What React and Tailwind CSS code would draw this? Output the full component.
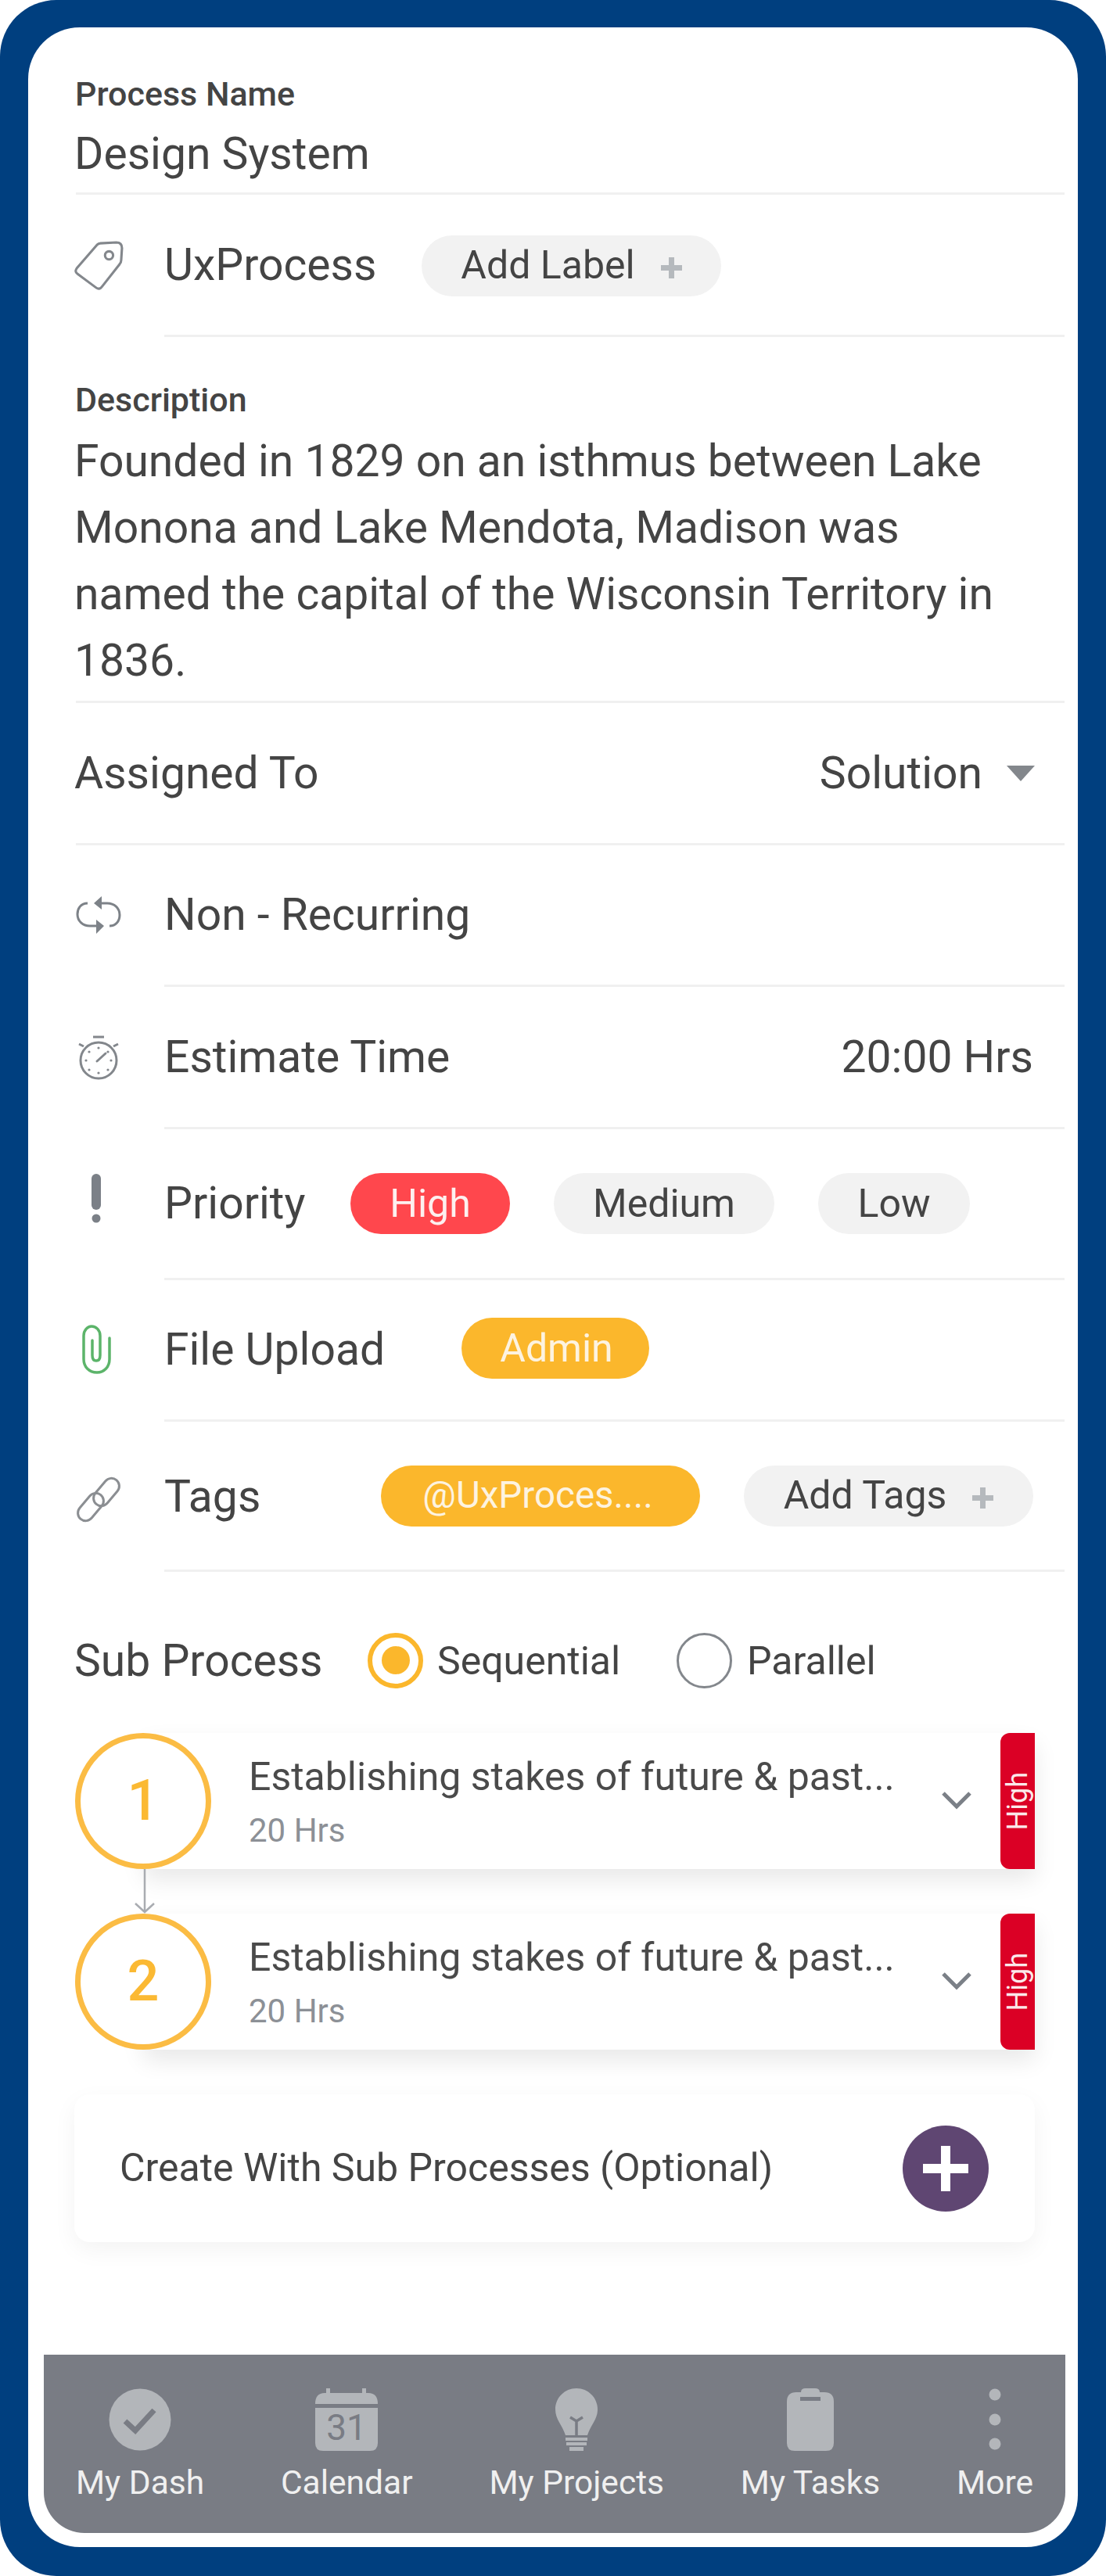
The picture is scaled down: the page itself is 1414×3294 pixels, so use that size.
const Field = ({ icon, children, className = '' }) => (
  <div className="flex">
    <div className="w-[113px] shrink-0 flex items-center">{icon}</div>
    <div className={`flex-1 flex items-center border-b-[3px] border-[#f0f0f0] ${className}`}>{children}</div>
  </div>
);

const Pill = ({ className = '', children }) => (
  <div className={`h-[78px] rounded-full flex items-center justify-center text-[50px] ${className}`}>{children}</div>
);

const TagIcon = () => (
  <svg width="64" height="64" viewBox="0 0 62 62" fill="none" stroke="#83878c" strokeWidth="3" strokeLinejoin="round" className="-ml-[3px]">
    <path d="M33 3 L53 2 Q60 2 60 9 L59 24 Q59 27 57 29 L35 57 Q32 61 28 58 L5 41 Q1 38 4 34 L29 5 Q31 3 33 3 Z" />
    <circle cx="44" cy="18" r="5" />
  </svg>
);

const RepeatIcon = () => (
  <svg width="58" height="50" viewBox="0 0 58 50" fill="none" className="mt-[-3px]">
    <path d="M15 10 C6 10 2 17 2 24 C2 33 9 39 18 39 L27 39" stroke="#7d8288" strokeWidth="3" />
    <path d="M43 39 C51 39 56 33 56 25 C56 16 49 10 40 10 L30 10" stroke="#7d8288" strokeWidth="3" />
    <path d="M26 31 L36 39 L26 49 Z M33 1 L23 10 L33 18 Z" fill="#7d8288" />
  </svg>
);

const WatchIcon = () => (
  <svg width="56" height="58" viewBox="0 0 56 58" fill="none" stroke="#83878c" className="ml-[1px]">
    <circle cx="28" cy="32" r="23" strokeWidth="3" />
    <path d="M21 2 H35" strokeWidth="3" />
    <path d="M3 11 L9 14 M53 11 L47 14" strokeWidth="3" />
    <path d="M26 33 L37 23" strokeWidth="3" strokeLinecap="round" />
    <g fill="#83878c" stroke="none">
      <circle cx="28" cy="16" r="1.6" /><circle cx="28" cy="48" r="1.6" />
      <circle cx="12" cy="32" r="1.6" /><circle cx="44" cy="32" r="1.6" />
      <circle cx="16" cy="21" r="1.6" /><circle cx="40" cy="44" r="1.6" />
      <circle cx="16" cy="44" r="1.6" /><circle cx="40" cy="21" r="1.6" />
    </g>
  </svg>
);

const BangIcon = () => (
  <svg width="14" height="64" viewBox="0 0 14 64" className="ml-[19px] mt-[-16px]" fill="#7b8087">
    <rect x="1" y="0" width="12" height="46" rx="6" />
    <circle cx="7" cy="57" r="5.5" />
  </svg>
);

const ClipIcon = () => (
  <svg width="37" height="63" viewBox="0 0 37 63" fill="none" stroke="#5cb46a" strokeWidth="3.5" strokeLinecap="round" className="ml-[8px] mt-[-4px]">
    <path d="M35 17 V44 C35 54 28 61 19 61 C9 61 2 54 2 44 V14 C2 7 7 2 12 2 C18 2 23 7 23 14 V39 C23 44 21 46 18 46 C15 46 13 44 13 39 V20" />
  </svg>
);

const LinkIcon = () => (
  <svg width="60" height="60" viewBox="0 0 60 60" fill="none" stroke="#8b8e92" strokeWidth="3" className="mt-[8px] ml-[-2px]">
    <rect x="-10" y="-20" width="20" height="40" rx="10" transform="translate(41 20) rotate(40)" />
    <rect x="-10" y="-20" width="20" height="40" rx="10" transform="translate(21 39) rotate(40)" />
  </svg>
);

const Chevron = () => (
  <svg width="40" height="24" viewBox="0 0 40 24" fill="none" stroke="#7b8087" strokeWidth="5">
    <path d="M3 3 L20 20 L37 3" />
  </svg>
);

const PlusMark = ({ className = '' }) => (
  <svg width="27" height="27" viewBox="0 0 27 27" fill="#b5b9bd" className={className}>
    <path d="M10 0 H17 V10 H27 V17 H17 V27 H10 V17 H0 V10 H10 Z" />
  </svg>
);

const SubRow = ({ num }) => (
  <div className="flex h-[174px]">
    <div className="relative z-10 -ml-[1px] w-[174px] h-[174px] shrink-0 rounded-full border-[7px] border-[#fbbc44] bg-white flex items-center justify-center text-[72px] font-medium text-[#fbb933]">
      {num}
    </div>
    <div className="-ml-[86px] flex-1 flex bg-white shadow-[0_14px_28px_rgba(0,0,0,0.09)]">
      <div className="pl-[134px] flex-1 pt-[28px]">
        <div className="text-[50px] leading-[56px] text-[#4a4a4a]">Establishing stakes of future &amp; past...</div>
        <div className="text-[42px] leading-[50px] mt-[16px] text-[#8c9096]">20 Hrs</div>
      </div>
      <div className="flex items-center mr-[36px] mt-[-2px]"><Chevron /></div>
      <div className="w-[44px] bg-[#db0025] rounded-l-[12px] flex items-center justify-center overflow-hidden">
        <span className="[writing-mode:vertical-rl] rotate-180 text-[36px] leading-[44px] text-[#fbe9ea]">High</span>
      </div>
    </div>
  </div>
);

const NavItem = ({ label, icon }) => (
  <div className="flex flex-col items-center">
    <div className="h-[79px] flex items-center justify-center">{icon}</div>
    <div className="mt-[17px] text-[42.5px] leading-[50px] text-[#f0f0f0]">{label}</div>
  </div>
);

export default function App() {
  return (
    <div className="w-[1414px] h-[3294px] bg-white font-['Roboto',sans-serif] text-[#444444]">
      <div className="h-full rounded-[72px] bg-[#003f7f] pt-[35px] pl-[36px] pr-[36px] pb-[37px]">
        <div className="h-full rounded-[66px] bg-white flex flex-col">
          <div className="pl-[61px] pr-[17px]">
            {/* name */}
            <div className="pt-[60px] pb-[16px] border-b-[3px] border-[#f0f0f0]">
              <div className="-ml-[1px] text-[43px] leading-[50px] font-medium">Process Name</div>
              <div className="mt-[19px] -ml-[2px] text-[57px] leading-[66px]">Design System</div>
            </div>

            <Field icon={<TagIcon />} className="h-[182px]">
              <div className="w-[329px] text-[57px]">UxProcess</div>
              <Pill className="w-[383px] mt-[2px] bg-[#f2f2f2]">
                Add Label
                <PlusMark className="ml-[33px] mt-[6px]" />
              </Pill>
            </Field>

            <div className="pt-[55px] pb-[9px] border-b-[3px] border-[#f0f0f0]">
              <div className="-ml-[1px] text-[43px] leading-[50px] font-medium">Description</div>
              <p className="mt-[11px] -ml-[2px] w-[1200px] text-[57px] leading-[85px]">
                Founded in 1829 on an isthmus between Lake Monona and Lake Mendota, Madison was named the capital of the Wisconsin Territory in 1836.
              </p>
            </div>

            <div className="h-[182px] flex items-center justify-between border-b-[3px] border-[#f0f0f0] pr-[38px] text-[57px]">
              <div className="-ml-[2px]">Assigned To</div>
              <div className="flex items-center">
                Solution
                <div className="ml-[31px] w-0 h-0 border-l-[18px] border-r-[18px] border-t-[20px] border-l-transparent border-r-transparent border-t-[#83878c]" />
              </div>
            </div>

            <Field icon={<RepeatIcon />} className="h-[181px] text-[57px]">Non - Recurring</Field>

            <Field icon={<WatchIcon />} className="h-[182px] text-[57px] justify-between pr-[40px]">
              <div>Estimate Time</div>
              <div>20:00 Hrs</div>
            </Field>

            <Field icon={<BangIcon />} className="h-[193px]">
              <div className="w-[238px] text-[57px]">Priority</div>
              <Pill className="w-[204px] bg-[#ff474d] text-[#fdf0ef]">High</Pill>
              <Pill className="ml-[56px] w-[282px] bg-[#f2f2f2]">Medium</Pill>
              <Pill className="ml-[56px] w-[194px] bg-[#f2f2f2]">Low</Pill>
            </Field>

            <Field icon={<ClipIcon />} className="h-[181px]">
              <div className="w-[380px] text-[57px]">File Upload</div>
              <Pill className="w-[240px] -mt-[4px] pl-[3px] bg-[#fbb72c] text-[#fdf3e0]">Admin</Pill>
            </Field>

            <Field icon={<LinkIcon />} className="h-[192px]">
              <div className="w-[277px] mt-[2px] text-[57px]">Tags</div>
              <Pill className="w-[408px] pr-[7px] bg-[#fbb72c] !text-[47.5px] text-[#fdf3e0]">@UxProces....</Pill>
              <Pill className="ml-[56px] w-[370px] bg-[#f2f2f2]">
                Add Tags
                <PlusMark className="ml-[33px] mt-[6px]" />
              </Pill>
            </Field>

            {/* sub process */}
            <div className="pt-[20px] h-[206px] flex items-center">
              <div className="w-[375px] -ml-[2px] mt-[2px] text-[57px]">Sub Process</div>
              <div className="w-[71px] h-[71px] rounded-full border-[6px] border-[#fbb72c] flex items-center justify-center">
                <div className="w-[36px] h-[36px] rounded-full bg-[#fbb72c]" />
              </div>
              <div className="ml-[18px] w-[306px] mt-[2px] text-[50px]">Sequential</div>
              <div className="w-[71px] h-[71px] rounded-full border-[3px] border-[#83878c]" />
              <div className="ml-[19px] mt-[2px] text-[50px]">Parallel</div>
            </div>

            <div className="pr-[38px]">
              <SubRow num="1" />
              <div className="h-[57px] pl-[73px]">
                <svg width="30" height="57" viewBox="0 0 30 57" fill="none" stroke="#a9acb1" strokeWidth="2.5">
                  <path d="M15 0 V55 M3 44 L15 55 L27 44" />
                </svg>
              </div>
              <SubRow num="2" />

              <div className="mt-[57px] -ml-[2px] h-[189px] rounded-[20px] bg-white shadow-[0_10px_30px_rgba(0,0,0,0.05)] flex items-center justify-between pl-[58px] pr-[59px]">
                <div className="text-[50px]">Create With Sub Processes (Optional)</div>
                <div className="w-[110px] h-[110px] rounded-full bg-[#5f4672] flex items-center justify-center">
                  <svg width="58" height="58" viewBox="0 0 58 58" fill="#ffffff">
                    <path d="M23 0 H35 V23 H58 V35 H35 V58 H23 V35 H0 V23 H23 Z" />
                  </svg>
                </div>
              </div>
            </div>
          </div>

          {/* bottom nav */}
          <div className="mt-auto mb-[18px] ml-[20px] mr-[16px] h-[228px] rounded-b-[52px] bg-[#797c84] pt-[43px] px-[41px] flex justify-between">
            <NavItem
              label="My Dash"
              icon={
                <svg width="80" height="80" viewBox="0 0 80 80">
                  <circle cx="40" cy="40" r="39.5" fill="#b3b6ba" />
                  <path d="M21 42 L34 54 L58 28" fill="none" stroke="#797c84" strokeWidth="7" />
                </svg>
              }
            />
            <NavItem
              label="Calendar"
              icon={
                <svg width="80" height="80" viewBox="0 0 80 80">
                  <path d="M0 20 Q0 6 12 6 H14 V0 H19 V6 H60 V0 H65 V6 H68 Q80 6 80 20 V20 H0 Z" fill="#b3b6ba" />
                  <path d="M0 25 H80 V70 Q80 80 70 80 H10 Q0 80 0 70 Z" fill="#b3b6ba" />
                  <text x="40" y="66" textAnchor="middle" fontFamily="Roboto" fontSize="46" fill="#797c84">31</text>
                </svg>
              }
            />
            <NavItem
              label="My Projects"
              icon={
                <svg width="54" height="80" viewBox="0 0 54 80">
                  <path d="M27 0 C12 0 0 12 0 27 C0 40 9 47 13 60 H41 C45 47 54 40 54 27 C54 12 42 0 27 0 Z" fill="#b3b6ba" />
                  <path d="M19 37 L27 42 L35 37 M27 42 V60" fill="none" stroke="#797c84" strokeWidth="3.5" />
                  <path d="M13 63 H41 V67 H13 Z M14 69 H40 V73 H14 Z M18 75 H36 V80 H18 Z" fill="#b3b6ba" />
                </svg>
              }
            />
            <NavItem
              label="My Tasks"
              icon={
                <svg width="60" height="80" viewBox="0 0 60 80">
                  <path d="M18 5 Q18 0 24 0 H36 Q42 0 42 5 H48 Q60 5 60 17 V70 Q60 80 50 80 H10 Q0 80 0 70 V17 Q0 5 12 5 Z" fill="#b3b6ba" />
                  <rect x="17" y="11" width="26" height="5" fill="#797c84" />
                </svg>
              }
            />
            <NavItem
              label="More"
              icon={
                <svg width="16" height="80" viewBox="0 0 16 80" fill="#b3b6ba">
                  <circle cx="8" cy="8" r="7.5" /><circle cx="8" cy="40" r="7.5" /><circle cx="8" cy="71" r="7.5" />
                </svg>
              }
            />
          </div>
        </div>
      </div>
    </div>
  );
}
